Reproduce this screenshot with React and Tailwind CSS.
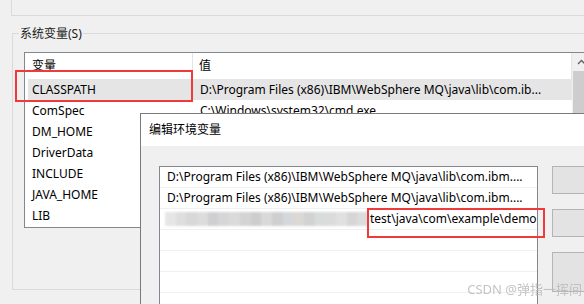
const mainRows = [
  { name: 'CLASSPATH', value: 'D:\\Program Files (x86)\\IBM\\WebSphere MQ\\java\\lib\\com.ib...', selected: true },
  { name: 'ComSpec', value: 'C:\\Windows\\system32\\cmd.exe' },
  { name: 'DM_HOME', value: '' },
  { name: 'DriverData', value: '' },
  { name: 'INCLUDE', value: '' },
  { name: 'JAVA_HOME', value: '' },
  { name: 'LIB', value: '' },
];

const mosaic = ['#e6e6e6', '#dedede', '#d8d8d8', '#dcdcdc', '#cfcfd2', '#d6d6d6', '#dadada', '#d4d4d4', '#cdcdcd', '#d9d9d9', '#cfcfcf', '#d5d8da', '#dcd8d4', '#d2d2d2', '#d9dcdc', '#dbdbdb', '#e0e0e0', '#d6d6d6', '#dcdcdc'];

const RedBox = ({ className }) => (
  <div className={`absolute border-2 border-[#f03a3a] ${className}`} />
);

const Blurred = () => (
  <div className="flex items-center h-[14px] w-[203px] blur-[1.2px]">
    {mosaic.map((c, i) => (
      <div key={i} className="h-full flex-1" style={{ background: c }} />
    ))}
  </div>
);

export default function App() {
  return (
    <div className="relative w-[584px] h-[304px] overflow-hidden bg-[#f0f0f0] text-[12px] text-black font-['Noto_Sans','Noto_Sans_CJK_SC',sans-serif]">
      {/* remnant of upper group box */}
      <div className="ml-[11px] h-[16px] border-l border-b border-[#dadada]" />

      {/* 系统变量 group */}
      <div className="ml-[12px] mt-[17px] w-[600px] h-[257px] border border-[#dadada]">
        <div className="-mt-[8px] ml-[6px] px-[1px] w-fit h-[16px] leading-[16px] bg-[#f0f0f0] text-[#1a1a1a]">
          系统变量(S)
        </div>

        <div className="mt-[10px] ml-[11px] w-[566px] h-[176px] border border-[#828790] bg-white flex">
          <div className="w-[547px] flex flex-col">
            <div className="h-[26px] flex shrink-0">
              <div className="w-[168px] pl-[7px] flex items-center border-r border-[#e5e5e5]">变量</div>
              <div className="flex-1 pl-[6px] flex items-center border-r border-[#e5e5e5]">值</div>
            </div>
            {mainRows.map((r) => (
              <div key={r.name} className="h-[21px] pl-[3px] flex shrink-0">
                <div className={`flex-1 flex items-center ${r.selected ? 'bg-[#e5e5e5]' : ''}`}>
                  <div className="w-[165px] pl-[4px] whitespace-nowrap">{r.name}</div>
                  <div className="flex-1 pl-[7px] whitespace-nowrap overflow-hidden">{r.value}</div>
                </div>
              </div>
            ))}
          </div>
          <div className="w-[17px] bg-[#f0f0f0] flex flex-col">
            <div className="h-[18px] flex items-center justify-center pl-[1px]">
              <svg width="9" height="6" viewBox="0 0 9 6">
                <path d="M1 5 L4.5 1.5 L8 5" fill="none" stroke="#606060" strokeWidth="1.3" />
              </svg>
            </div>
            <div className="ml-[1px] mr-[1px] h-[120px] bg-[#cdcdcd]" />
          </div>
        </div>
      </div>

      <RedBox className="left-[15px] top-[70px] w-[178px] h-[32px]" />

      {/* 编辑环境变量 dialog */}
      <div className="absolute left-[140px] top-[113px] w-[470px] h-[200px] border border-[#7a7a7a] bg-[#f0f0f0]">
        <div className="h-[32px] bg-white pl-[8px] flex items-center">编辑环境变量</div>
        <div className="flex">
          <div className="ml-[18px] mt-[20px] w-[393px] h-[200px] border border-[#828790] bg-white">
            <div className="h-[21px] pl-[7px] flex items-center border-b border-[#f0f0f0] whitespace-nowrap">
              D:\Program Files (x86)\IBM\WebSphere MQ\java\lib\com.ibm....
            </div>
            <div className="h-[21px] pl-[7px] flex items-center border-b border-[#f0f0f0] whitespace-nowrap">
              D:\Program Files (x86)\IBM\WebSphere MQ\java\lib\com.ibm....
            </div>
            <div className="h-[21px] pl-[5px] flex items-center border-b border-[#f0f0f0] whitespace-nowrap">
              <Blurred />
              <span className="ml-[2px]">test\java\com\example\demo</span>
            </div>
            <div className="h-[21px] border-b border-[#f0f0f0]" />
            <div className="h-[21px] border-b border-[#f0f0f0]" />
            <div className="h-[21px] border-b border-[#f0f0f0]" />
          </div>
          <div className="ml-[14px] mt-[20px] flex flex-col gap-[15px]">
            <div className="w-[80px] h-[28px] bg-[#e3e3e3] border border-[#b4b4b4]" />
            <div className="w-[80px] h-[28px] bg-[#e3e3e3] border border-[#b4b4b4]" />
            <div className="w-[80px] h-[40px] bg-[#e3e3e3] border border-[#b4b4b4]" />
          </div>
        </div>
      </div>

      <RedBox className="left-[367px] top-[208px] w-[178px] h-[30px]" />

      <div className="absolute right-[2px] bottom-[5px] text-[13px] text-[#bdbdbd] opacity-90 whitespace-nowrap">
        CSDN @弹指一挥间
      </div>
    </div>
  );
}
